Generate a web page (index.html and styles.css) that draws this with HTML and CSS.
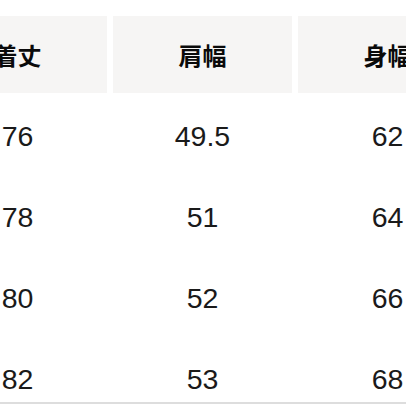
FILE: index.html
```html
<!DOCTYPE html>
<html lang="ja">
<head>
<meta charset="utf-8">
<link rel="stylesheet" href="styles.css">
</head>
<body>
<div class="viewport">
  <div class="table">
    <div class="row head">
      <div class="cell">着丈</div>
      <div class="cell">肩幅</div>
      <div class="cell">身幅</div>
    </div>
    <div class="body">
      <div class="row data">
        <div class="cell">76</div>
        <div class="cell">49.5</div>
        <div class="cell">62</div>
      </div>
      <div class="row data">
        <div class="cell">78</div>
        <div class="cell">51</div>
        <div class="cell">64</div>
      </div>
      <div class="row data">
        <div class="cell">80</div>
        <div class="cell">52</div>
        <div class="cell">66</div>
      </div>
      <div class="row data last">
        <div class="cell">82</div>
        <div class="cell">53</div>
        <div class="cell">68</div>
      </div>
    </div>
  </div>
</div>
</body>
</html>
```
FILE: styles.css
```css
html, body {
  margin: 0;
  padding: 0;
  background: #ffffff;
}
.viewport {
  width: 406px;
  height: 406px;
  overflow: hidden;
}
.table {
  margin-left: -72px;
  width: 549px;
  padding-top: 16px;
}
.row {
  display: grid;
  grid-template-columns: 179px 179px 179px;
  column-gap: 6px;
}
.head .cell {
  height: 77px;
  background: #f6f5f4;
  display: flex;
  align-items: center;
  justify-content: center;
  font-family: "Noto Sans CJK JP", sans-serif;
  font-weight: 700;
  font-size: 24px;
  color: #0a0a0a;
}
.body {
  margin-top: 2px;
  border-bottom: 2px solid #dddddd;
}
.data .cell {
  height: 81px;
  box-sizing: border-box;
  padding-top: 26px;
  text-align: center;
  font-family: "Liberation Sans", Arial, sans-serif;
  font-size: 28.5px;
  line-height: 30px;
  color: #1a1a1a;
}
.data.last .cell {
  height: 64px;
}
```
